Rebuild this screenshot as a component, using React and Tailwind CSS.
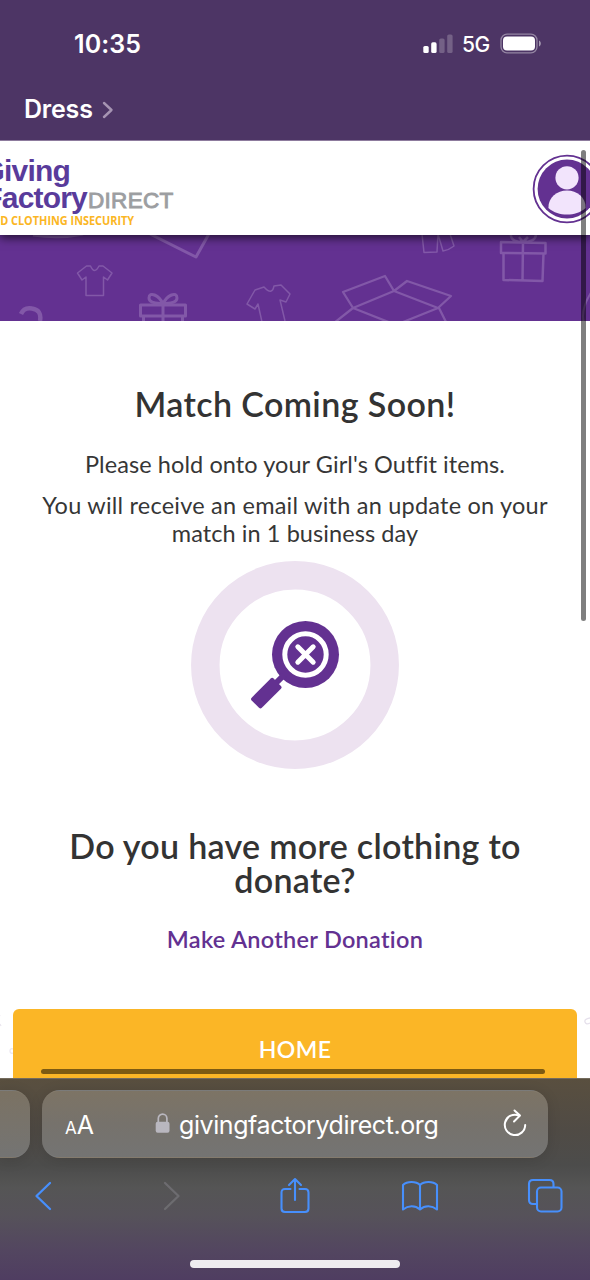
function StatusBar() {
  return (
    <div className="relative z-20 h-[140px] bg-[#4d3565] text-white font-['Inter',sans-serif]">
      <div className="flex h-[88px] items-center justify-between pl-[74px] pr-[48px]">
        <span className="text-[25px] font-semibold leading-none tracking-[0.1px]">10:35</span>
        <div className="flex items-center">
          <svg width="31" height="20" viewBox="0 0 31 20" fill="#fff">
            <rect x="0.3" y="12" width="5.4" height="7" rx="1.6" />
            <rect x="8.2" y="8.3" width="5.4" height="10.7" rx="1.6" />
            <rect x="16.2" y="4.5" width="5.4" height="14.5" rx="1.6" opacity="0.22" />
            <rect x="24.2" y="0.5" width="5.4" height="18.5" rx="1.6" opacity="0.22" />
          </svg>
          <span className="ml-[8px] w-[28px] text-[21px] font-medium leading-none tracking-[-0.6px]">5G</span>
          <svg className="ml-[10px]" width="42" height="22" viewBox="0 0 42 22">
            <rect x="1" y="1.2" width="36" height="18.6" rx="6" fill="none" stroke="#fff" strokeOpacity="0.4" strokeWidth="1.3" />
            <rect x="3" y="3.4" width="32" height="14" rx="4" fill="#fff" />
            <path d="M39 7.500c2.400 1.200 2.400 4.800 0 6z" fill="#fff" fillOpacity="0.5" />
          </svg>
        </div>
      </div>
      <div className="flex h-[41px] items-center pl-[24px]">
        <span className="mt-[1px] text-[25px] font-semibold leading-none tracking-[-0.2px]">Dress</span>
        <svg className="ml-[9px] mt-[3px]" width="12" height="18" viewBox="0 0 12 18" fill="none" stroke="#a694b2" strokeWidth="2.4" strokeLinecap="round" strokeLinejoin="round">
          <path d="M2 2l7.500 7L2 16" />
        </svg>
      </div>
    </div>
  )
}

function SiteHeader() {
  return (
    <header className="relative z-10 flex h-[95px] items-start justify-between border-t border-[#8d7b9d] bg-white shadow-[0_3px_9px_rgba(0,0,0,0.65)]">
      <div className="pt-[15px] font-['Liberation_Sans',sans-serif] leading-none">
        <div className="flex h-[27px] w-[70px] justify-end text-[30px] font-bold tracking-[-0.8px] text-[#593b9b]">
          <span>Giving</span>
        </div>
        <div className="flex h-[30px] items-baseline">
          <div className="flex w-[87px] justify-end text-[30px] font-bold tracking-[-0.8px] text-[#593b9b]">
            <span>Factory</span>
          </div>
          <span className="ml-[1px] text-[22.500px] tracking-[0.3px] text-[#9c9ea1] [-webkit-text-stroke:0.9px]">DIRECT</span>
        </div>
        <div className="flex h-[17px] w-[134px] items-center justify-end font-['Open_Sans',sans-serif] text-[12.500px] font-bold text-[#fbb624]">
          <span className="origin-right scale-x-[0.87] whitespace-nowrap">END CLOTHING INSECURITY</span>
        </div>
      </div>
      <svg className="mt-[13px] -mr-[12px] shrink-0" width="70" height="70" viewBox="0 0 70 70">
        <circle cx="35" cy="35" r="33.4" fill="#fff" stroke="#633191" strokeWidth="1.8" />
        <circle cx="35" cy="35" r="29.4" fill="#633191" />
        <circle cx="35" cy="23.8" r="11.6" fill="#f2e4fc" />
        <path d="M16.400 54C16.200 43 25 36.500 35 36.500S53.800 43 53.600 54C48 58.800 42 60.600 35 60.600S22 58.800 16.400 54z" fill="#f2e4fc" />
      </svg>
    </header>
  )
}

function Banner() {
  return (
    <div className="h-[86px] bg-[#633191]">
      <svg width="590" height="86" viewBox="0 0 590 86" fill="none" stroke="#8258a8" strokeWidth="2" strokeLinejoin="round">
        <path d="M33 0Q60 4 83-1" strokeWidth="3" />
        <path d="M150-1l46 23 14-25" strokeWidth="3" />
        <path d="M21 79Q24 72 32 73.500Q42 75 40 86" strokeWidth="4.500" />
        {/* shirts */}
        <path d="M86 60.500V42l-4 3-4.500-7 9-7h4q4 9 8.500 0h4l9 7-4.500 7-4-3v18.500z" strokeWidth="1.500" />
        <path d="M262 87l-4-18-3 5-8-5 8-14 9-3q8 9 10-1l7-1 9 9-4 8-6-2 5 21" strokeWidth="1.500" />
        {/* gift boxes */}
        <g strokeWidth="3">
          <path d="M140.500 70h45v11h-45zM143.500 81v8M182.500 81v8M163 70v17" />
          <path d="M163 69c-4-9-14-13-14-6 0 5 7 5 14 6zM163 69c4-9 14-13 14-6 0 5-7 5-14 6z" />
        </g>
        <g strokeWidth="2.500">
          <path d="M501 7l44.500 1v10.500l-44.500-.5zM503.500 18v27l39 1 1-27.500M523 7l-.5 39" />
          <path d="M523 7c-5 0-13-1-12-8M523 7c5 0 13-1 13-8M523 7l-4-5M523 7l5-5" />
        </g>
        {/* trousers */}
        <path d="M422-1l2 18.500 13-.5L438-1l5 17q6-1 11-5l-4-12" strokeWidth="1.500" />
        {/* open box */}
        <path d="M334 88l19-15-10-16 42-16 9 15 13-10 44 15-13 12-44-17-41 17 38 15M438 73l-35 14M439 73l7 14" strokeWidth="2.300" />
        <path d="M592 56q-12 19-8 32" />
      </svg>
    </div>
  )
}

function NotFoundIcon() {
  return (
    <svg className="mx-auto mt-[14px] block" width="208" height="208" viewBox="0 0 208 208">
      <circle cx="104" cy="104" r="89.700" fill="none" stroke="#ede2f0" strokeWidth="28.500" />
      <circle cx="114.500" cy="93.500" r="33.500" fill="#633191" />
      <path d="M82 125l11-11" stroke="#633191" strokeWidth="6" />
      <rect x="-7.200" y="-15.500" width="14.400" height="31" rx="2" transform="translate(75.300 132.200) rotate(45)" fill="#633191" />
      <circle cx="114.500" cy="93.500" r="20.700" fill="none" stroke="#fff" strokeWidth="5" />
      <path d="M106.800 85.800l15.400 15.400M122.200 85.800l-15.400 15.400" stroke="#fff" strokeWidth="5" strokeLinecap="round" />
    </svg>
  )
}

function Main() {
  return (
    <main className="h-[757px] overflow-hidden bg-white text-center font-['Lato',sans-serif] text-[#363636] [font-variant-ligatures:none]">
      <h1 className="mt-[63px] text-[34px] font-semibold leading-[40px] tracking-[0.4px] text-[#333]">Match Coming Soon!</h1>
      <p className="mt-[26px] text-[23.500px] leading-[28px] tracking-[0.08px]">Please hold onto your Girl's Outfit items.</p>
      <p className="mt-[13px] text-[23.500px] leading-[28px] tracking-[0.22px]">
        You will receive an email with an update on your
        <br />
        <span className="tracking-[0.08px]">match in 1 business day</span>
      </p>
      <NotFoundIcon />
      <h2 className="mt-[60px] text-[34px] font-semibold leading-[34px] tracking-[0.3px] text-[#333]">
        Do you have more clothing to
        <br />
        donate?
      </h2>
      <a className="mt-[28px] block text-[23.500px] font-semibold leading-[28px] tracking-[0.28px] text-[#633191]">Make Another Donation</a>
      <div className="mx-[13px] mt-[56px] h-[90px] rounded-[6px] bg-[#fbb626] pt-[26px] text-[23px] font-semibold leading-[28px] tracking-[0.4px] text-white">
        HOME
      </div>
    </main>
  )
}

function AddressBar() {
  return (
    <div className="flex h-[68px] gap-[12px]">
      <div className="w-[30px] rounded-r-[18px] border-y border-white/5 bg-linear-to-b from-[#7b7263] to-[#747473] shadow-[0_2px_14px_rgba(0,0,0,0.12)]" />
      <div className="flex w-[506px] items-center rounded-[18px] border-y border-white/5 bg-linear-to-b from-[#7d7465] via-[#76726c] to-[#747473] pl-[23px] pr-[21px] text-white shadow-[0_2px_14px_rgba(0,0,0,0.12)]">
        <div className="mt-[2px] flex w-[31px] items-baseline leading-none">
          <span className="text-[17px]">A</span>
          <span className="text-[25px]">A</span>
        </div>
        <svg className="ml-[59px]" width="16" height="22" viewBox="0 0 16 22">
          <rect x="0.700" y="8.800" width="13.800" height="11" rx="2" fill="#b9b7bf" />
          <path d="M3.300 9V5.500a4.300 4.300 0 0 1 8.600 0V9" fill="none" stroke="#b9b7bf" strokeWidth="1.700" />
        </svg>
        <span className="ml-[8px] mt-[2px] text-[25px] leading-none tracking-[-0.42px]">givingfactorydirect.org</span>
        <svg className="ml-auto" width="24" height="30" viewBox="0 0 24 30" fill="none" stroke="#fff" strokeWidth="2" strokeLinecap="round" strokeLinejoin="round">
          <path d="M16 6.500A10.200 10.200 0 1 0 22.200 16" />
          <path d="M11.500 1.500l5.500 5-6 6" />
        </svg>
      </div>
      <div className="flex-1" />
    </div>
  )
}

function Toolbar() {
  return (
    <div className="flex h-[76px] items-center justify-between pl-[34px] pr-[27px]">
      <svg width="20" height="32" viewBox="0 0 20 32" fill="none" stroke="#478ffc" strokeWidth="2.300" strokeLinecap="round" strokeLinejoin="round">
        <path d="M16 3L2.500 16 16 29" />
      </svg>
      <svg className="ml-[12px]" width="20" height="32" viewBox="0 0 20 32" fill="none" stroke="#6d6c70" strokeWidth="2.300" strokeLinecap="round" strokeLinejoin="round">
        <path d="M2 3l13.500 13L2 29" />
      </svg>
      <svg className="-ml-[2px]" width="32" height="38" viewBox="0 0 32 38" fill="none" stroke="#478ffc" strokeWidth="2.100" strokeLinecap="round" strokeLinejoin="round">
        <path d="M11.500 12H6q-3.500 0-3.500 3.500v16Q2.500 35 6 35h20q3.500 0 3.500-3.500v-16Q29.500 12 26 12h-5.500M16 23V2M10 8l6-6 6 6" />
      </svg>
      <svg className="-ml-[7px]" width="38" height="32" viewBox="0 0 38 32" fill="none" stroke="#478ffc" strokeWidth="2.100" strokeLinecap="round" strokeLinejoin="round">
        <path d="M19 29.500C14 25 7 25.500 2 29.500V5C6 1 15 1 19 5C23 1 32 1 36 5v24.500C31 25.500 24 25 19 29.500zM19 5v24" />
      </svg>
      <svg className="-ml-[9px]" width="36" height="36" viewBox="0 0 36 36" fill="none" stroke="#478ffc" strokeWidth="2.100" strokeLinejoin="round">
        <rect x="10" y="9.500" width="24.500" height="24" rx="4" />
        <path d="M10 26H6q-4 0-4-4V6q0-4 4-4h16.500q4 0 4 4v3.500" />
      </svg>
    </div>
  )
}

export default function App() {
  return (
    <div className="relative flex h-[1280px] w-[590px] flex-col overflow-hidden bg-white">
      <StatusBar />
      <SiteHeader />
      <Banner />
      <Main />
      <div className="h-[202px] border-t border-[#746b5d] bg-[linear-gradient(#594f3f_0%,#504b45_25%,#4c4c4b_43%,#555555_54%,#56525a_68%,#534660_85%,#4f3d61_100%)] pt-[11px] font-['Inter',sans-serif]">
        <AddressBar />
        <Toolbar />
        <div className="mx-auto mt-[26px] h-[8px] w-[210px] rounded-full bg-[#efedf0]" />
      </div>
      {/* faint pattern at the page edges */}
      <svg className="absolute left-0 top-[1010px]" width="13" height="50" viewBox="0 0 13 50" fill="none" stroke="#ebe7ef" strokeWidth="1.300">
        <path d="M0 5l-1 2M0 14l1 2M13 39q-3-1-3 2t3 2" />
      </svg>
      <svg className="absolute right-0 top-[1015px]" width="7" height="12" viewBox="0 0 7 12" fill="none" stroke="#e6e1ec" strokeWidth="1.300">
        <path d="M7 3Q1 4 2 7t5 1" />
      </svg>
      {/* scroll indicators */}
      <div className="absolute left-[581px] top-[150px] z-20 h-[471px] w-[5px] rounded-full bg-black/50" />
      <div className="absolute left-[41px] top-[1069px] z-20 h-[5px] w-[504px] rounded-full bg-black/50" />
    </div>
  )
}
